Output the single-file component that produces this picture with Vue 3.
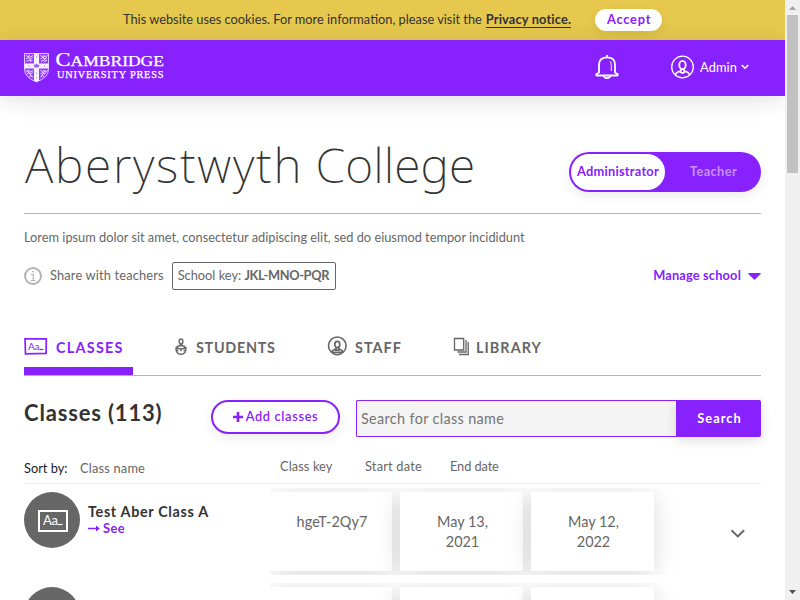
<script setup>
import { ref } from 'vue'

const tabs = [
  { id: 'classes', label: 'CLASSES' },
  { id: 'students', label: 'STUDENTS' },
  { id: 'staff', label: 'STAFF' },
  { id: 'library', label: 'LIBRARY' },
]
const activeTab = ref('classes')

const classes = [
  { id: 1, name: 'Test Aber Class A', key: 'hgeT-2Qy7', start: 'May 13, 2021', end: 'May 12, 2022' },
  { id: 2, name: '', key: '', start: '', end: '' },
]
</script>

<template>
  <div class="window">
    <div class="page">
      <div class="cookie">
        <span>This website uses cookies. For more information, please visit the</span>
        <a class="notice">Privacy notice.</a>
        <button class="accept">Accept</button>
      </div>

      <header class="header">
        <svg class="brand" width="142" height="40" viewBox="0 -4 142 40">
          <path d="M.5 1.500h24v15.500q0 9-12 12.800Q.5 26 .5 17z" fill="#fff" fill-opacity=".18" stroke="#fff" stroke-width=".9" opacity=".8" />
          <path d="M10 1.500h5v10h9.500v5H15v12.200l-2.500 1.200-2.500-1.200V16.500H.5v-5H10z" fill="#fff" opacity=".93" />
          <path d="M12.500 11.500l1.200 1.300h1.800l-1 2.700h-4l-1-2.700h1.800z" fill="#8722ff" opacity=".75" />
          <path d="M12.500 4v2M12.500 20v2M12.500 25v1.500M5 13v2M20.500 13v2" stroke="#8722ff" stroke-width="1" opacity=".35" />
          <g fill="none" stroke="#fff" stroke-width="1" opacity=".8">
            <path d="M2 3.500l2 1 1.500-1 1 1.500 2.500-1.500M2 7l2-1.500 2.500 1.500 2-1.500M2.500 9.500l2-1.500 1.500 1.500 2.500-1.500M4 4l3 5" />
            <path d="M16.500 3.500l2 1 1.500-1 1 1.500 2.500-1.500M16.500 7l2-1.500 2.500 1.500 2-1.500M17 9.500l2-1.500 1.500 1.500 2.500-1.500M18.500 4l3 5" />
            <path d="M2 18.500l2 1 1.500-1 1 1.500 2.500-1.500M3 22l2-1.500 1.500 1.500 2-1.500M5 25l2-1.500 2 1.500M4 18.500l3.500 6" />
            <path d="M16.500 18.500l2 1 1.500-1 1 1.500 2.500-1.500M16.500 22l2-1.500 1.500 1.500 2-1.500M16.500 25l2-1.500 1.500 1M21 18.500l-3.500 6" />
          </g>
          <text class="brand-name" y="14.300"><tspan x="31.500" font-size="19" textLength="15" lengthAdjust="spacingAndGlyphs">C</tspan><tspan x="46.500" font-size="14.500" textLength="93.500" lengthAdjust="spacingAndGlyphs">AMBRIDGE</tspan></text>
          <text class="brand-name" x="33" y="25.500" font-size="10.300" textLength="106.500" lengthAdjust="spacing">UNIVERSITY PRESS</text>
        </svg>
        <svg class="bell" width="24" height="24" viewBox="0 0 24 24" fill="none" stroke="#fff" stroke-width="1.800" stroke-linejoin="round">
          <path d="M12 0v2.500M4 17.500V9.500C4 5 7 2.300 12 2.300s8 2.700 8 7.200v8l2.500 1.500q.8 1.500-.5 1.500H2q-1.300 0-.5-1.500z" />
          <path d="M15 6.300q1.300 1.500 1.300 4V16" stroke-width=".9" />
          <path d="M8.500 21q1 2.200 3.500 2.200t3.500-2.200" />
        </svg>
        <div class="account">
          <svg width="24" height="24" viewBox="0 0 24 24" fill="none" stroke="#fff">
            <circle cx="12.500" cy="12" r="10.800" stroke-width="1.300" />
            <ellipse cx="12.500" cy="10" rx="3.200" ry="4.200" stroke-width="1.800" />
            <path d="M11 13.500v2.500q-4.500.8-5.500 3.700M14 13.500v2.500q4.500.8 5.500 3.700M9.500 16.500q3 3 6 0" stroke-width="1.700" />
          </svg>
          <span>Admin</span>
          <svg width="8" height="6" viewBox="0 0 8 6" fill="none" stroke="#fff" stroke-width="1.600"><path d="M.7 1l3.300 3.200L7.300 1" /></svg>
        </div>
      </header>

      <main class="content">
        <div class="title-row">
          <h1><span class="first">Aberystwyth</span> <span class="second">College</span></h1>
          <div class="role">
            <span class="role-on">Administrator</span>
            <span class="role-off">Teacher</span>
          </div>
        </div>

        <p class="intro">Lorem ipsum dolor sit amet, consectetur adipiscing elit, sed do eiusmod tempor incididunt</p>

        <div class="share">
          <svg width="18" height="18" viewBox="0 0 18 18" fill="none" stroke="#b3b3b3">
            <circle cx="9" cy="9" r="8" stroke-width="2" />
            <path d="M7 7.500h2.200v6M6.800 13.500h4.600" stroke-width="1.100" />
            <circle cx="9" cy="4.700" r=".5" fill="#b3b3b3" />
          </svg>
          <span class="share-text">Share with teachers</span>
          <span class="key-box">School key: <b>JKL-MNO-PQR</b></span>
          <a class="manage">Manage school</a>
          <svg class="caret" width="13" height="7" viewBox="0 0 13 7"><path d="M.8 0h11.400q1 .2.400 1L7.300 6.300q-.8.700-1.600 0L.4 1q-.6-.8.4-1z" fill="#8722ff" /></svg>
        </div>

        <nav class="tabs">
          <a v-for="tab in tabs" :key="tab.id" class="tab" :class="[tab.id, { active: activeTab === tab.id }]" @click="activeTab = tab.id">
            <svg v-if="tab.id === 'classes'" width="24" height="20" viewBox="0 0 24 20" fill="none" stroke="currentColor">
              <path d="M1 2.800h21.300l-.2 14.500-20.600.6z" stroke-width="1.700" />
              <text class="aa" x="4" y="14" font-size="10">Aa</text>
              <path d="M15.500 13.500h4" stroke-width="1.200" />
            </svg>
            <svg v-else-if="tab.id === 'students'" width="14" height="20" viewBox="0 0 14 20" fill="none" stroke="currentColor" stroke-width="1.400">
              <ellipse cx="7" cy="5.500" rx="1.900" ry="2.500" />
              <path d="M6.300 8v2M7.700 8v2M2.500 11.500q1.500-2.300 4.500-1.700 3-.6 4.500 1.700M1.300 11.800l5.700 1.200 5.700-1.200M2 12.500q0 5.800 5 5.800t5-5.800M7 12.500v2.800M2 14.500h2.500M9.500 14.500H12" />
            </svg>
            <svg v-else-if="tab.id === 'staff'" width="20" height="20" viewBox="0 0 20 20" fill="none" stroke="currentColor">
              <circle cx="10.300" cy="9.800" r="8.800" stroke-width="1.600" />
              <ellipse cx="10.300" cy="8.500" rx="2.500" ry="3.200" stroke-width="1.700" />
              <path d="M9 11v2q-3.500.5-4.300 3M11.600 11v2q3.500.5 4.300 3M5 16.200h10.500M7.800 14.200h5" stroke-width="1.600" />
            </svg>
            <svg v-else width="16" height="20" viewBox="0 0 16 20" fill="none" stroke="currentColor" stroke-width="1.300">
              <path d="M1.500 2.500h9.200v11.500H1.500zM13 4v12H4.500M15.200 6v12.500H6" />
            </svg>
            <span>{{ tab.label }}</span>
          </a>
        </nav>

        <div class="toolbar">
          <h2>Classes (113)</h2>
          <button class="add">
            <svg width="10" height="10" viewBox="0 0 10 10"><path d="M5 0v10M0 5h10" stroke="#8722ff" stroke-width="2.600" /></svg>
            <span>Add classes</span>
          </button>
          <div class="search">
            <input type="text" placeholder="Search for class name" />
            <button>Search</button>
          </div>
        </div>

        <div class="sort">
          <span class="sort-by">Sort by:</span>
          <span class="col-name">Class name</span>
          <span class="col-key">Class key</span>
          <span class="col-start">Start date</span>
          <span class="col-end">End date</span>
        </div>

        <div v-for="row in classes" :key="row.id" class="row">
          <div class="avatar">
            <svg v-if="row.name" width="32" height="24" viewBox="0 0 32 24" fill="none" stroke="#fff">
              <path d="M2 2h28v20H2z" stroke-width="2" />
              <text class="aa light" x="6" y="15.800" font-size="13">Aa</text>
              <path d="M20.500 15.500h5" stroke-width="1.200" />
            </svg>
          </div>
          <div class="info">
            <div class="name">{{ row.name }}</div>
            <a v-if="row.name" class="see">
              <svg width="12" height="7" viewBox="0 0 12 7"><path d="M0 3.500h9" stroke="#8722ff" stroke-width="1.500" /><path d="M8 .6L11.800 3.500 8 6.400z" fill="#8722ff" /></svg>
              <span>See</span>
            </a>
          </div>
          <div class="cells">
            <div class="cell key">{{ row.key }}</div>
            <div class="cell">{{ row.start }}</div>
            <div class="cell">{{ row.end }}</div>
          </div>
          <svg class="chevron" width="16" height="10" viewBox="0 0 16 10" fill="none" stroke="#666" stroke-width="1.900"><path d="M1.500 1.300l6.300 6.200 6.300-6.200" /></svg>
        </div>
      </main>
    </div>

    <div class="scrollbar">
      <svg width="15" height="15" viewBox="0 0 15 15"><path d="M4 10l3.500-4L11 10z" fill="#a3a3a3" /></svg>
      <div class="thumb"></div>
      <svg class="down" width="15" height="15" viewBox="0 0 15 15"><path d="M4 5l3.500 4L11 5z" fill="#505050" /></svg>
    </div>
  </div>
</template>

<style>
body { margin: 0; overflow: hidden; }
</style>

<style scoped>
* { box-sizing: border-box; }
.window {
  display: flex;
  width: 800px;
  height: 600px;
  overflow: hidden;
  background: #fff;
  color: #666;
  font: 12.8px/20px Lato, "Noto Sans", sans-serif;
}
.page { width: 785px; height: 600px; overflow: hidden; }
h1, h2, p { margin: 0; }
button { border: 0; padding: 0; font: inherit; font-weight: 700; }
svg { display: block; flex: none; }

.cookie { display: flex; align-items: center; height: 40px; padding-left: 123px; background: #e5c84d; color: #333; white-space: nowrap; }
.cookie span { padding-bottom: 2px; }
.notice { margin-left: 4px; font-weight: 700; letter-spacing: .150px; line-height: 15px; border-bottom: 1px solid #333; }
.accept { width: 67px; height: 22px; margin-left: 24px; padding: 0 0 2px 1px; border-radius: 11px; background: #fff; color: #8722ff; letter-spacing: .8px; box-shadow: 0 3px 10px rgba(0, 0, 0, .08); }

.header { position: relative; display: flex; align-items: center; height: 56px; padding: 0 36px 0 24px; background: #8722ff; color: #fff; box-shadow: 0 4px 24px rgba(0, 0, 0, .12); }
.brand-name { font-family: "Liberation Serif", serif; fill: #fff; stroke: #fff; stroke-width: .250px; }
.bell { margin: 0 51px 3px auto; }
.account { display: flex; align-items: center; margin-bottom: 2px; }
.account span { margin: 0 4px 0 6px; letter-spacing: .1px; }

.content { padding: 0 24px; }
.title-row { display: flex; justify-content: space-between; align-items: flex-start; height: 118px; border-bottom: 1px solid #b3b3b3; }
h1 { padding-top: 40px; margin-left: 1px; font: 200 48px/58px "Noto Sans", sans-serif; color: #333; white-space: nowrap; }
.first { letter-spacing: 1.700px; }
.second { letter-spacing: .1px; }
.role { display: flex; width: 192px; height: 40px; margin-top: 56px; padding: 2px; border-radius: 20px; background: #8722ff; box-shadow: 0 4px 12px rgba(0, 0, 0, .08); font-weight: 700; line-height: 35px; text-align: center; }
.role-on { width: 94px; border-radius: 18px; background: #fff; color: #8722ff; letter-spacing: .250px; }
.role-off { flex: 1; padding-left: 3px; color: #c690ff; letter-spacing: .4px; }

.intro { height: 48px; padding-top: 13px; white-space: nowrap; }
.share { display: flex; align-items: center; height: 28px; white-space: nowrap; }
.share-text { margin: -2px 8px 0; letter-spacing: .170px; }
.key-box { width: 164px; height: 28px; padding-left: 5px; border: 1px solid #666; border-radius: 2px; line-height: 25px; }
.key-box b { letter-spacing: -.350px; }
.manage { margin: -2px 0 0 auto; color: #8722ff; font-weight: 700; letter-spacing: .170px; }
.caret { margin-left: 7px; }

.tabs { display: flex; height: 52px; margin-top: 34px; border-bottom: 1px solid #b3b3b3; }
.tab { display: flex; height: 51px; padding-top: 12px; color: #666; font-size: 14.400px; font-weight: 700; line-height: 24px; white-space: nowrap; }
.tab span { flex: none; }
.tab.classes { width: 109px; margin-right: 41px; letter-spacing: 1.250px; }
.tab.classes span { margin-left: 8px; }
.tab.active { color: #8722ff; border-bottom: 8px solid #8722ff; }
.tab.students { width: 153px; letter-spacing: .7px; }
.tab.students span { margin-left: 8px; }
.tab.staff { width: 126px; letter-spacing: 1px; }
.tab.staff span { margin-left: 8px; }
.tab.library { letter-spacing: 1.050px; }
.tab.library span { margin-left: 7px; }
.aa { font-family: Lato, sans-serif; font-weight: 400; letter-spacing: -.3px; fill: currentColor; stroke: none; }
.aa.light { fill: #fff; }

.toolbar { display: flex; align-items: flex-start; height: 61px; padding-top: 24px; }
h2 { width: 187px; color: #333; font-size: 22px; font-weight: 700; line-height: 26px; letter-spacing: .830px; white-space: nowrap; }
.add { display: flex; align-items: center; justify-content: center; gap: 3px; width: 129px; height: 34px; padding-bottom: 1px; border: 2px solid #8722ff; border-radius: 17px; background: #fff; color: #8722ff; font-weight: 600; letter-spacing: .650px; box-shadow: 0 4px 12px rgba(0, 0, 0, .08); }
.add span { margin-top: -2px; }
.search { display: flex; width: 405px; height: 37px; margin-left: 16px; }
input { width: 320px; height: 37px; padding: 0 4px; border: 1px solid #8722ff; border-right: 0; border-radius: 2px 0 0 2px; background: #f4f4f4; font: 14.400px Lato, sans-serif; letter-spacing: .350px; }
input::placeholder { color: #757575; }
.search button { width: 85px; height: 37px; padding: 0 0 1px 2px; border-radius: 0 2px 2px 0; background: #8722ff; color: #fff; letter-spacing: 1px; box-shadow: 0 4px 12px rgba(0, 0, 0, .12); }

.sort { display: flex; height: 47px; padding-top: 19px; border-bottom: 1px solid #f0f0f0; white-space: nowrap; }
.sort span { flex: none; }
.sort-by { width: 56px; padding-top: 2px; color: #222; }
.col-name { width: 200px; padding-top: 2px; letter-spacing: .2px; }
.col-key { width: 85px; letter-spacing: .1px; }
.col-start { width: 85px; letter-spacing: .2px; }
.col-end { letter-spacing: -.1px; }

.row { display: flex; height: 95px; padding-top: 4px; }
.avatar { display: flex; align-items: center; justify-content: center; width: 56px; height: 56px; margin-top: 4px; padding: 2px 0 0 2px; border-radius: 50%; background: #666; }
.info { width: 182px; padding: 10px 0 0 8px; }
.name { height: 20px; color: #333; font-size: 14.400px; font-weight: 700; line-height: 20px; letter-spacing: .650px; margin-top: 4px; }
.see { display: flex; align-items: center; gap: 3px; height: 12px; color: #8722ff; font-weight: 700; letter-spacing: .5px; }
.see span { margin-top: -1px; }
.cells { display: flex; gap: 8px; width: 424px; height: 87px; padding: 4px 0; margin-left: 8px; overflow: hidden; }
.cell { flex: none; width: 123px; height: 79px; padding: 20px 29px 0 31px; border-radius: 2px; background: #fff; box-shadow: 0 4px 24px rgba(0, 0, 0, .15); font-size: 14.400px; line-height: 20px; text-align: center; }
.cell.key { width: 122px; padding: 20px 0 0 2px; letter-spacing: .1px; }
.chevron { margin: 41px 0 0 36px; }

.scrollbar { width: 15px; height: 600px; display: flex; flex-direction: column; align-items: center; background: #f0f0f0; }
.thumb { width: 11px; height: 158px; background: #c1c1c1; }
.down { margin-top: auto; }
</style>
